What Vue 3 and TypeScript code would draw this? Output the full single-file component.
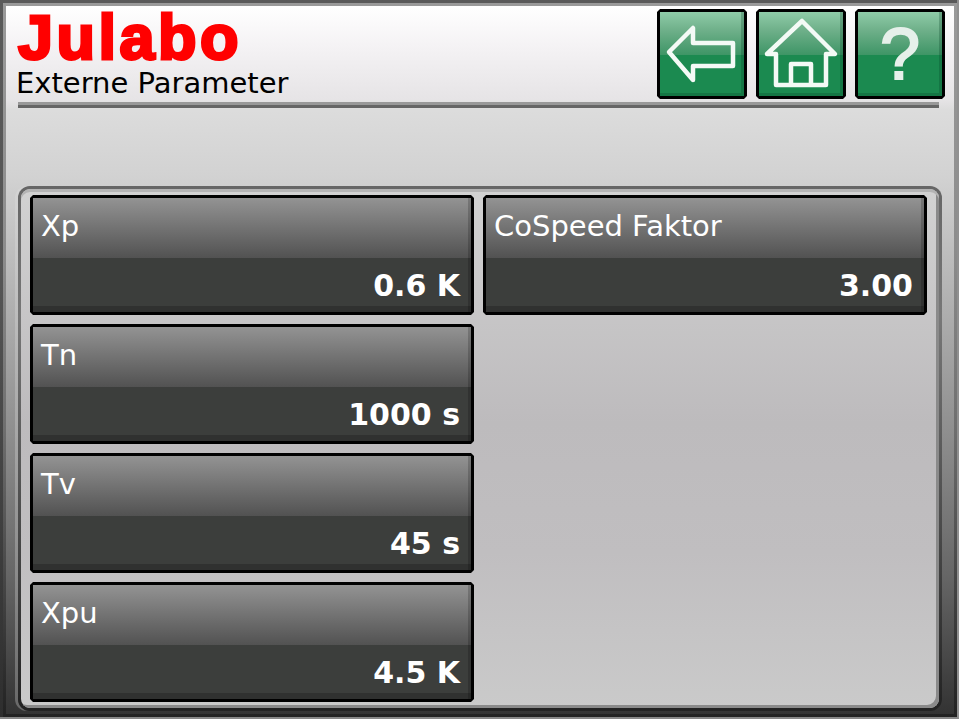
<script setup lang="ts">
interface Param {
  label: string
  value: string
}

const params: Param[] = [
  { label: 'Xp', value: '0.6 K' },
  { label: 'Tn', value: '1000 s' },
  { label: 'Tv', value: '45 s' },
  { label: 'Xpu', value: '4.5 K' },
  { label: 'CoSpeed Faktor', value: '3.00' }
]
</script>

<template>
  <div class="screen">
    <div class="bezel">
      <div class="display">
        <header class="header">
          <div class="header__top">
            <div class="brand">
              <div class="brand__logo">Julabo</div>
              <div class="brand__title">Externe Parameter</div>
            </div>
            <nav class="nav">
              <button class="nav__btn" type="button" aria-label="Zurück">
                <svg viewBox="0 0 84 84">
                  <path d="M9 40 33 16V31H73V54H33V68Z" />
                </svg>
              </button>
              <button class="nav__btn" type="button" aria-label="Home">
                <svg viewBox="0 0 84 84">
                  <path d="M43 9 76 42H67V73H17V42H8Z" />
                  <path d="M32 73V52H52V73" />
                </svg>
              </button>
              <button class="nav__btn nav__btn--text" type="button">?</button>
            </nav>
          </div>
          <div class="header__rule"></div>
        </header>

        <main class="panel">
          <div class="panel__grid">
            <div v-for="p in params" :key="p.label" class="card">
              <div class="card__label">{{ p.label }}</div>
              <div class="card__value">{{ p.value }}</div>
            </div>
          </div>
        </main>
      </div>
    </div>
  </div>
</template>

<style>
html,
body {
  margin: 0;
  background: #888;
}
</style>

<style scoped>
.screen {
  box-sizing: border-box;
  width: 959px;
  height: 719px;
  overflow: hidden;
  padding: 3px 0 0 3px;
  background: linear-gradient(#5a5a5a, #555 40%, #2e2e2e);
  border-right: 2px solid #909090;
  border-bottom: 2px solid #888;
}

.bezel {
  box-sizing: border-box;
  height: 100%;
  padding: 3px;
  background: linear-gradient(#9a9a9a, #8c8c8c 35%, #6e6e6e 60%, #222);
}

.display {
  display: flex;
  flex-direction: column;
  height: 100%;
  background: linear-gradient(#dcdcdc 104px, #d2d2d2 170px, #a8a8a8 330px, #888 450px, #666 570px, #333);
}

.header {
  box-sizing: border-box;
  height: 104px;
  padding: 3px 9px 0 12px;
  background: linear-gradient(#fff, #f4f2f4 40%, #e6e4e6 90%, #dcdcdc);
}

.header__top {
  display: flex;
  justify-content: space-between;
}

.brand {
  padding-top: 2px;
}

.brand__logo {
  height: 52px;
  color: #ff0000;
  font-family: 'Liberation Sans', Arial, sans-serif;
  font-size: 63px;
  font-weight: 700;
  line-height: 52px;
  letter-spacing: 3.5px;
  -webkit-text-stroke: 3px #ff0000;
}

.brand__title {
  height: 32px;
  margin: 4px 0 0 -2px;
  color: #000;
  font-family: 'DejaVu Sans', sans-serif;
  font-size: 29px;
  line-height: 32px;
  white-space: nowrap;
}

.nav {
  display: flex;
  gap: 9px;
}

.nav__btn {
  display: flex;
  align-items: center;
  justify-content: center;
  box-sizing: border-box;
  width: 90px;
  height: 90px;
  padding: 0;
  border: 3px solid #000;
  background: linear-gradient(#8fcba8, #6fb08a 18px, #3e9566 43px, #1b8a50 43px);
  box-shadow: inset -3px -3px 0 rgba(0, 60, 30, 0.25);
  clip-path: polygon(3px 0, calc(100% - 3px) 0, 100% 3px, 100% calc(100% - 3px), calc(100% - 3px) 100%, 3px 100%, 0 calc(100% - 3px), 0 3px);
}

.nav__btn svg {
  display: block;
  width: 84px;
  height: 84px;
  fill: none;
  stroke: #f4faf6;
  stroke-width: 4.5;
  stroke-linejoin: round;
}

.nav__btn--text {
  color: #e6f0ea;
  font-family: 'Liberation Sans', Arial, sans-serif;
  font-size: 72px;
  font-weight: 400;
  line-height: 84px;
  -webkit-text-stroke: 2px #e6f0ea;
}

.header__rule {
  height: 6px;
  margin: 3px 6px 0 0;
  background: linear-gradient(#999 50%, #666 50%);
}

.panel {
  box-sizing: border-box;
  width: 924px;
  height: 525px;
  margin: 76px 0 3px 12px;
  border: 3px solid transparent;
  border-radius: 12px;
  background:
    linear-gradient(#d2d2d2, #bdbbbd 45%, #c0bec0 70%, #cacaca) padding-box,
    linear-gradient(#666, #777 25%, #4a4a4a 65%, #222) border-box;
  box-shadow:
    -3px 0 0 rgba(225, 225, 225, 0.3),
    inset 0 3px 0 #b4b4b4,
    inset -3px -3px 0 #8a8a8a;
}

.panel__grid {
  display: grid;
  grid-auto-flow: column;
  grid-template-rows: repeat(4, 120px);
  grid-template-columns: repeat(2, 444px);
  gap: 9px;
  padding: 6px 0 0 9px;
}

.card {
  display: flex;
  flex-direction: column;
  box-sizing: border-box;
  border: 3px solid #000;
  color: #fff;
  clip-path: polygon(3px 0, calc(100% - 3px) 0, 100% 3px, 100% calc(100% - 3px), calc(100% - 3px) 100%, 3px 100%, 0 calc(100% - 3px), 0 3px);
}

.card__label {
  box-sizing: border-box;
  height: 60px;
  padding: 9px 8px 0;
  background: linear-gradient(#939393, #525252);
  box-shadow: inset -3px 0 0 rgba(0, 0, 0, 0.18);
  font-family: 'DejaVu Sans', sans-serif;
  font-size: 29px;
  line-height: 38px;
  white-space: nowrap;
}

.card__value {
  box-sizing: border-box;
  height: 54px;
  padding: 9px 11px 0 8px;
  background: #3c3e3c;
  box-shadow:
    inset -3px 0 0 rgba(0, 0, 0, 0.18),
    inset 0 -6px 0 #303130;
  font-family: 'DejaVu Sans', sans-serif;
  font-size: 30px;
  font-weight: 700;
  line-height: 38px;
  text-align: right;
  white-space: nowrap;
}
</style>
